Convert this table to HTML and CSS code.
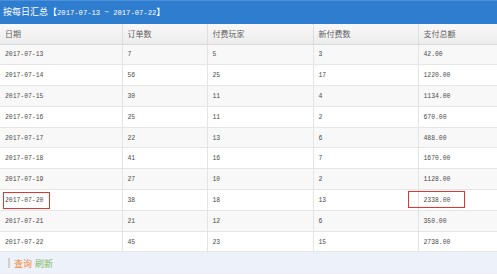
FILE: index.html
```html
<!DOCTYPE html>
<html lang="zh">
<head>
<meta charset="utf-8">
<link rel="stylesheet" href="styles.css">
</head>
<body>
<div class="panel">
  <div class="title">按每日汇总<span class="br">【</span><span class="num">2017-07-13 <span class="tilde">~</span> 2017-07-22</span><span class="br">】</span></div>
  <table class="grid">
    <colgroup>
      <col class="c1"><col class="c2"><col class="c3"><col class="c4"><col class="c5">
    </colgroup>
    <thead>
      <tr><th>日期</th><th>订单数</th><th>付费玩家</th><th>新付费数</th><th>支付总额</th></tr>
    </thead>
    <tbody>
      <tr class="odd"><td>2017-07-13</td><td>7</td><td>5</td><td>3</td><td>42.00</td></tr>
      <tr><td>2017-07-14</td><td>56</td><td>25</td><td>17</td><td>1220.00</td></tr>
      <tr class="odd"><td>2017-07-15</td><td>30</td><td>11</td><td>4</td><td>1134.00</td></tr>
      <tr><td>2017-07-16</td><td>25</td><td>11</td><td>2</td><td>670.00</td></tr>
      <tr class="odd"><td>2017-07-17</td><td>22</td><td>13</td><td>6</td><td>488.00</td></tr>
      <tr><td>2017-07-18</td><td>41</td><td>16</td><td>7</td><td>1670.00</td></tr>
      <tr class="odd"><td>2017-07-19</td><td>27</td><td>10</td><td>2</td><td>1128.00</td></tr>
      <tr><td class="mark"><span class="box box-date"></span>2017-07-20</td><td>38</td><td>18</td><td>13</td><td class="mark"><span class="box box-sum"></span>2338.00</td></tr>
      <tr class="odd"><td>2017-07-21</td><td>21</td><td>12</td><td>6</td><td>350.00</td></tr>
      <tr><td>2017-07-22</td><td>45</td><td>23</td><td>15</td><td>2738.00</td></tr>
    </tbody>
  </table>
  <div class="footer">
    <span class="sep"></span><span class="query">查询</span><span class="refresh">刷新</span>
  </div>
</div>
</body>
</html>
```
FILE: styles.css
```css
html, body {
  margin: 0;
  padding: 0;
  background: #ffffff;
}
.panel {
  width: 497px;
  height: 275px;
  overflow: hidden;
  font-family: "Noto Sans CJK SC", sans-serif;
}
.title {
  height: 24px;
  background: #2f7dcf;
  border-top: 1px solid #4a90dc;
  box-sizing: border-box;
  color: #ffffff;
  font-size: 9px;
  line-height: 22px;
  padding-left: 3px;
  white-space: nowrap;
}
.title .br {
  font-size: 9px;
}
.title .num {
  font-family: "Liberation Mono", monospace;
  font-size: 7.2px;
}
.title .tilde {
  font-family: "DejaVu Sans Mono", monospace;
  vertical-align: 1px;
}
.grid {
  width: 497px;
  border-collapse: collapse;
  table-layout: fixed;
}
.c1 { width: 122px; }
.c2 { width: 85px; }
.c3 { width: 106px; }
.c4 { width: 105px; }
.c5 { width: 79px; }
.grid th {
  height: 20px;
  box-sizing: border-box;
  padding: 0 0 0 5px;
  text-align: left;
  font-weight: normal;
  font-size: 8px;
  color: #5f5f5f;
  background: linear-gradient(#f8f8f8, #ececec);
  border-left: 1px solid #dedede;
  border-bottom: 1px solid #d8d8d8;
}
.grid td {
  height: 20.8px;
  box-sizing: border-box;
  padding: 1px 0 0 5px;
  font-family: "Liberation Mono", monospace;
  font-size: 6.4px;
  color: #4a4a4a;
  border-left: 1px solid #e4e4e4;
  border-bottom: 1px solid #e6e6e6;
  background: #ffffff;
}
.grid th:first-child, .grid td:first-child {
  border-left: none;
}
.grid tr.odd td {
  background: #f8f8f8;
}
.mark {
  position: relative;
}
.box {
  position: absolute;
  border: 1px solid #e8322f;
  box-sizing: border-box;
}
.box-date {
  left: 3px;
  top: 2px;
  width: 47px;
  height: 17px;
}
.box-sum {
  left: -11px;
  top: 1px;
  width: 57px;
  height: 17px;
}
.footer {
  height: 22px;
  background: #edf1f9;
  display: flex;
  align-items: center;
  padding-left: 8px;
  font-size: 9px;
}
.sep {
  width: 2px;
  height: 10px;
  background: #cfcfcf;
  margin-right: 4px;
}
.query {
  color: #f08a3c;
  margin-right: 3px;
}
.refresh {
  color: #7cba5e;
}
```
